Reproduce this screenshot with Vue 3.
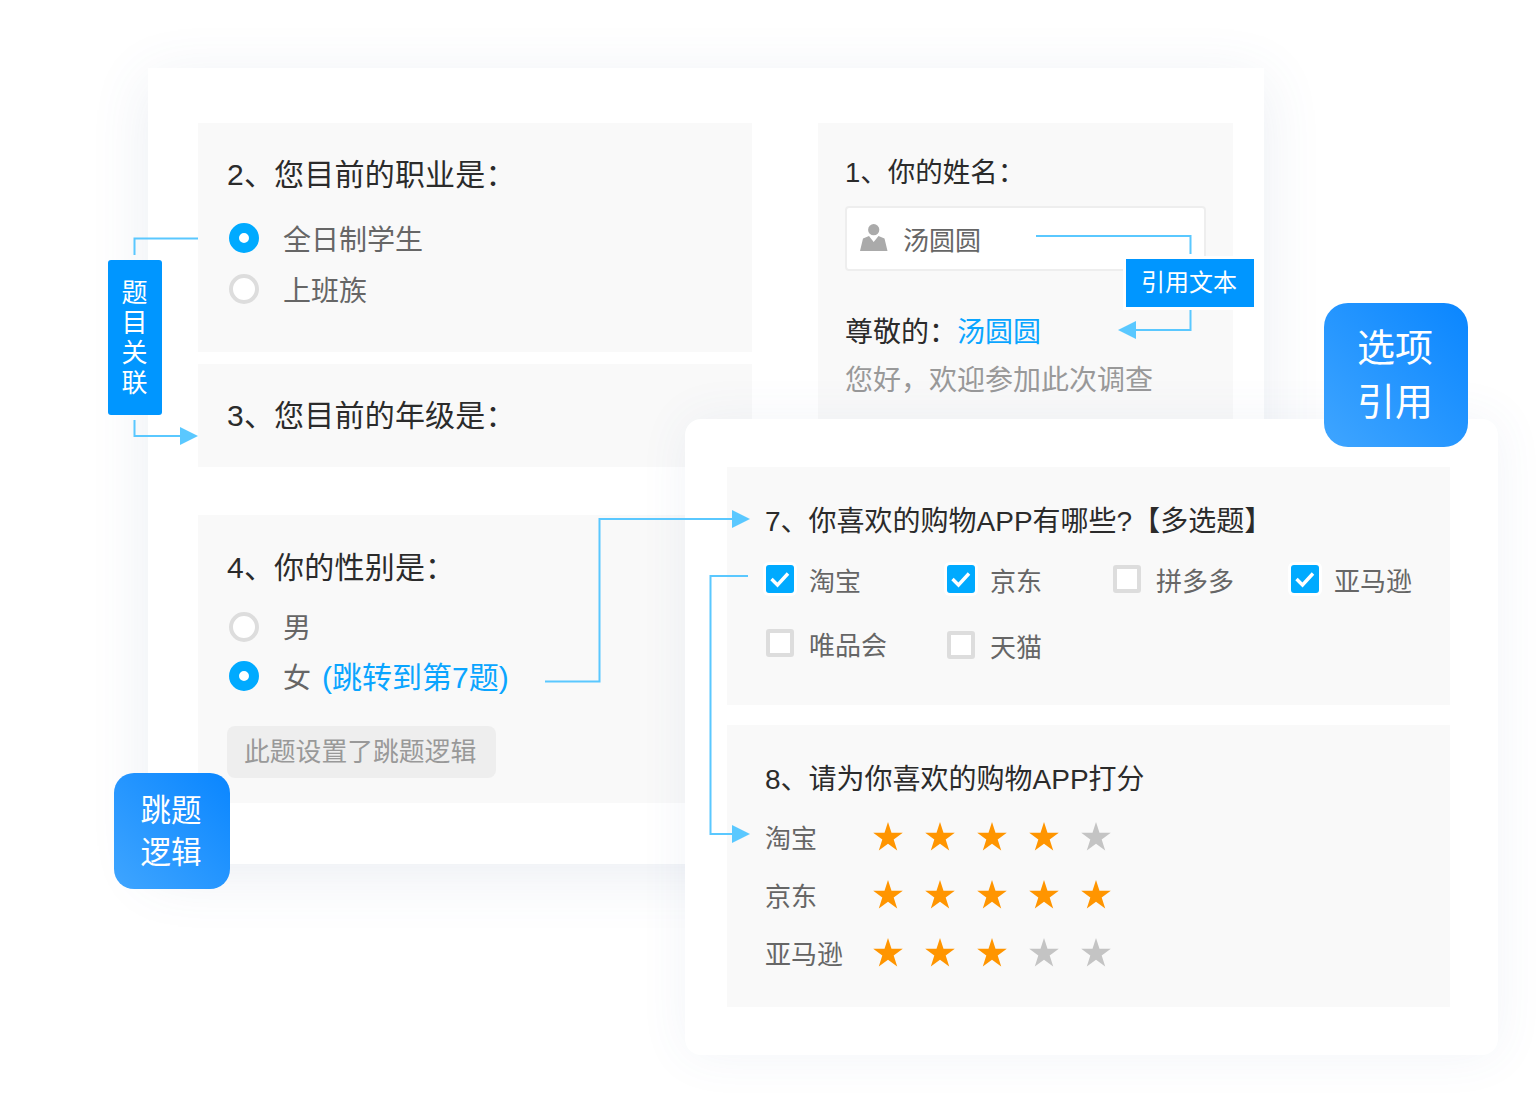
<script setup>
const jobs = [
  { text: '全日制学生', on: true },
  { text: '上班族', on: false }
]
const apps = [
  { text: '淘宝', on: true },
  { text: '京东', on: true },
  { text: '拼多多', on: false },
  { text: '亚马逊', on: true },
  { text: '唯品会', on: false },
  { text: '天猫', on: false, low: true }
]
const scores = [
  { text: '淘宝', score: 4 },
  { text: '京东', score: 5 },
  { text: '亚马逊', score: 3 }
]
const starPath = '15,0 18.5,10.8 29.8,10.8 20.7,17.6 24.2,28.6 15,21.8 5.8,28.6 9.3,17.6 0.2,10.8 11.5,10.8'
const lines = [
  '198,238.5 134.5,238.5 134.5,255',
  '134.5,420 134.5,436 182,436',
  '1036,236 1190.5,236 1190.5,254',
  '1190.5,310 1190.5,330 1134,330',
  '545,681.5 599.5,681.5 599.5,519 734,519',
  '748,576 710.5,576 710.5,834 734,834'
]
const arrows = [
  '180,427 198,436 180,445',
  '1136,321 1118,330 1136,339',
  '732,510 750,519 732,528',
  '732,825 750,834 732,843'
]
</script>

<template>
  <div class="canvas">
    <section class="card back">
      <div class="col left">
        <div class="panel q2">
          <h3 class="big">2、您目前的职业是：</h3>
          <div class="radio-list">
            <div class="radio-row" v-for="item in jobs" :key="item.text">
              <i class="radio" :class="{ on: item.on }"></i>
              <span>{{ item.text }}</span>
            </div>
          </div>
        </div>
        <div class="panel q3">
          <h3 class="big">3、您目前的年级是：</h3>
        </div>
        <div class="panel q4">
          <h3 class="big">4、你的性别是：</h3>
          <div class="radio-list">
            <div class="radio-row">
              <i class="radio"></i>
              <span>男</span>
            </div>
            <div class="radio-row">
              <i class="radio on"></i>
              <span>女<em class="link jump">(跳转到第7题)</em></span>
            </div>
          </div>
          <div class="tip">此题设置了跳题逻辑</div>
        </div>
      </div>
      <div class="col right">
        <div class="panel q1">
          <h3>1、你的姓名：</h3>
          <div class="name-input">
            <svg class="person" width="28" height="28" viewBox="0 0 28 28">
              <circle cx="13.7" cy="6.7" r="5.6" fill="#aaa" />
              <path d="M0 28 L3 15.5 L9 13 L13.7 19 L18.5 13 L24.5 15.5 L27.5 28 Z" fill="#aaa" />
            </svg>
            <span>汤圆圆</span>
          </div>
          <p class="greet">尊敬的：<em class="link">汤圆圆</em></p>
          <p class="welcome">您好，欢迎参加此次调查</p>
        </div>
      </div>
    </section>

    <section class="card front">
      <div class="panel q7">
        <h3>7、你喜欢的购物APP有哪些?【多选题】</h3>
        <div class="check-grid">
          <div class="check-row" :class="{ low: item.low }" v-for="item in apps" :key="item.text">
            <i class="check" :class="{ on: item.on }">
              <svg v-if="item.on" width="28" height="28" viewBox="0 0 28 28">
                <polyline points="5.5,14 11.5,20 22,8.5" fill="none" stroke="#fff" stroke-width="3.4" />
              </svg>
            </i>
            <span>{{ item.text }}</span>
          </div>
        </div>
      </div>
      <div class="panel q8">
        <h3>8、请为你喜欢的购物APP打分</h3>
        <div class="rate-row" v-for="row in scores" :key="row.text">
          <span class="rate-name">{{ row.text }}</span>
          <svg v-for="n in 5" :key="n" class="star" width="30" height="30" viewBox="0 0 30 30">
            <polygon :points="starPath" :fill="n <= row.score ? '#ff9500' : '#c4c4c4'" />
          </svg>
        </div>
      </div>
    </section>

    <svg class="wires" width="1540" height="1120" viewBox="0 0 1540 1120">
      <polyline v-for="p in lines" :key="p" :points="p" fill="none" stroke="#5ac8ff" stroke-width="2" />
      <polygon v-for="p in arrows" :key="p" :points="p" fill="#5ac8ff" />
    </svg>

    <div class="tag-side">题目关联</div>
    <div class="tag-quote">引用文本</div>
    <div class="badge badge-quote">选项<br />引用</div>
    <div class="badge badge-jump">跳题<br />逻辑</div>
  </div>
</template>

<style>
html, body {
  margin: 0;
  background: #fff;
}
</style>

<style scoped>
.canvas {
  position: relative;
  width: 1540px;
  height: 1120px;
  overflow: hidden;
  background: #fff;
  font-family: "Liberation Sans", "Noto Sans CJK SC", sans-serif;
  color: #666;
}
h3, p {
  margin: 0;
  font-weight: 400;
}
em {
  font-style: normal;
}
.card {
  position: absolute;
  background: #fff;
  box-sizing: border-box;
}
.back {
  left: 148px;
  top: 68px;
  width: 1116px;
  height: 796px;
  padding: 55px 31px 0 50px;
  display: flex;
  justify-content: space-between;
  box-shadow: 0 12px 56px rgba(70, 100, 150, 0.11);
}
.front {
  left: 685px;
  top: 419px;
  width: 813px;
  height: 636px;
  padding: 48px 48px 0 42px;
  border-radius: 16px;
  display: flex;
  flex-direction: column;
  gap: 20px;
  box-shadow: 0 0 50px rgba(70, 100, 150, 0.07);
}
.col {
  display: flex;
  flex-direction: column;
}
.left {
  width: 554px;
}
.right {
  width: 415px;
}
.panel {
  background: #f9f9f9;
  box-sizing: border-box;
}
h3 {
  font-size: 28px;
  line-height: 40px;
  color: #2b2b2b;
}
h3.big {
  font-size: 30px;
  letter-spacing: 0.2px;
}
.q2 {
  height: 229px;
  padding: 32px 0 0 29px;
}
.q3 {
  height: 103px;
  margin-top: 12px;
  padding: 32px 0 0 29px;
}
.q4 {
  height: 288px;
  margin-top: 48px;
  padding: 33px 0 0 29px;
}
.radio-list {
  margin-top: 28px;
  padding-left: 2px;
  display: flex;
  flex-direction: column;
  gap: 21px;
}
.q4 .radio-list {
  margin-top: 24px;
  gap: 19px;
}
.radio-row {
  display: flex;
  align-items: center;
  gap: 24px;
  height: 30px;
  font-size: 28px;
  line-height: 30px;
}
.radio-row span {
  position: relative;
  top: 3px;
  white-space: nowrap;
}
.q4 .radio-row span {
  top: 2px;
}
.radio {
  flex: none;
  width: 30px;
  height: 30px;
  box-sizing: border-box;
  border-radius: 50%;
  background: #fff;
  border: 4px solid #ddd;
}
.radio.on {
  background: #fff;
  border: 10px solid #00aaff;
}
.link {
  color: #0aa5ff;
}
.jump {
  margin-left: 11px;
  font-size: 30px;
}
.tip {
  margin-top: 35px;
  width: 269px;
  height: 52px;
  box-sizing: border-box;
  padding-left: 17px;
  border-radius: 8px;
  background: #eee;
  color: #999;
  font-size: 25.8px;
  line-height: 52px;
}
.q1 {
  height: 340px;
  padding: 30px 27px 0 27px;
}
.q1 h3 {
  font-size: 27.5px;
}
.name-input {
  margin-top: 13px;
  width: 361px;
  height: 65px;
  box-sizing: border-box;
  border: 2px solid #eee;
  border-radius: 4px;
  background: #fff;
  padding: 0 0 0 13px;
  display: flex;
  align-items: center;
  gap: 15px;
  font-size: 26px;
}
.person {
  flex: none;
  margin-top: -4px;
}
.greet {
  margin-top: 42px;
  font-size: 28px;
  line-height: 40px;
  color: #2b2b2b;
}
.welcome {
  margin-top: 8px;
  font-size: 28px;
  line-height: 40px;
  color: #999;
}
.q7 {
  width: 723px;
  height: 238px;
  padding: 35px 0 0 38px;
}
.check-grid {
  margin: 23px 0 0 1px;
  display: grid;
  grid-template-columns: 181px 166px 178px auto;
  row-gap: 36px;
}
.check-row {
  display: flex;
  align-items: center;
  gap: 15px;
  height: 28px;
  font-size: 26px;
}
.check-row.low {
  margin-top: 2px;
}
.check {
  flex: none;
  width: 28px;
  height: 28px;
  box-sizing: border-box;
  border-radius: 3px;
  background: #fff;
  border: 4px solid #ddd;
}
.check.on {
  border: 0;
  background: #00aaff;
  box-shadow: 0 0 0 3px #fff;
}
.check svg {
  display: block;
}
.q8 {
  width: 723px;
  height: 282px;
  padding: 35px 0 0 38px;
}
.q8 h3 {
  margin-bottom: 22px;
}
.rate-row {
  display: flex;
  align-items: center;
  gap: 22px;
  height: 30px;
  margin-bottom: 28px;
}
.rate-name {
  width: 86px;
  font-size: 26px;
  line-height: 30px;
  position: relative;
  top: 2px;
}
.star {
  flex: none;
}
.wires {
  position: absolute;
  left: 0;
  top: 0;
  pointer-events: none;
}
.tag-side {
  position: absolute;
  left: 108px;
  top: 260px;
  width: 54px;
  height: 155px;
  box-sizing: border-box;
  padding: 3px 3px 0 0;
  border-radius: 3px;
  background: #0096ff;
  color: #fff;
  font-size: 26px;
  letter-spacing: 4px;
  line-height: 54px;
  writing-mode: vertical-rl;
  text-align: center;
}
.tag-quote {
  position: absolute;
  left: 1126px;
  top: 259px;
  width: 128px;
  height: 48px;
  box-sizing: border-box;
  padding-right: 2px;
  background: #0096ff;
  color: #fff;
  font-size: 24px;
  line-height: 48px;
  text-align: center;
  box-shadow: 0 0 0 3px #fff;
}
.badge {
  position: absolute;
  box-sizing: border-box;
  background: linear-gradient(45deg, #3fa5ff, #0a86ff);
  color: #fff;
  text-align: center;
  display: flex;
  align-items: center;
  justify-content: center;
}
.badge-quote {
  left: 1324px;
  top: 303px;
  width: 144px;
  height: 144px;
  padding: 0 2px 0 0;
  border-radius: 24px;
  font-size: 38px;
  line-height: 54px;
}
.badge-jump {
  left: 114px;
  top: 773px;
  width: 116px;
  height: 116px;
  padding: 0 2px 0 0;
  border-radius: 20px;
  font-size: 30.5px;
  line-height: 42px;
}
</style>
